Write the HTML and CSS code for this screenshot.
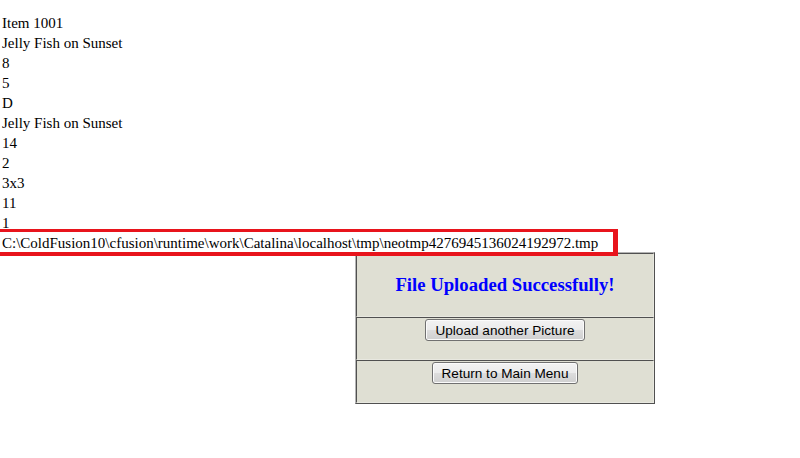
FILE: index.html
```html
<!DOCTYPE html>
<html>
<head>
<meta charset="utf-8">
<link rel="stylesheet" href="styles.css">
</head>
<body>
<div class="lines">
  <div>Item 1001</div>
  <div>Jelly Fish on Sunset</div>
  <div>8</div>
  <div>5</div>
  <div>D</div>
  <div>Jelly Fish on Sunset</div>
  <div>14</div>
  <div>2</div>
  <div>3x3</div>
  <div>11</div>
  <div>1</div>
  <div>C:\ColdFusion10\cfusion\runtime\work\Catalina\localhost\tmp\neotmp4276945136024192972.tmp</div>
</div>
<table class="panel">
  <tr><td class="head-cell"><h3 class="title">File Uploaded Successfully!</h3></td></tr>
  <tr><td class="btn-cell"><button class="btn">Upload another Picture</button></td></tr>
  <tr><td class="btn-cell"><button class="btn">Return to Main Menu</button></td></tr>
</table>
<div class="highlight"></div>
</body>
</html>
```
FILE: styles.css
```css
html, body {
  margin: 0;
  padding: 0;
  background: #ffffff;
}
body {
  position: relative;
  padding: 13px 0 0 2px;
  font-family: "Liberation Serif", "Times New Roman", serif;
  font-size: 15px;
  color: #000;
}
.lines div {
  line-height: 20px;
  height: 20px;
  white-space: nowrap;
}
.panel {
  margin-left: 353px;
  margin-top: -1px;
  width: 300px;
  border-collapse: separate;
  border-spacing: 0;
  border: 1px solid;
  border-color: #b4b4b4 #505050 #505050 #b4b4b4;
}
.panel td {
  background: #dfdfd3;
  border: 1px solid;
  border-color: #505050 #e8e8e0 #e8e8e0 #505050;
  text-align: center;
  vertical-align: top;
  padding: 0;
}
.head-cell {
  height: 62px;
  vertical-align: middle !important;
}
.title {
  margin: 0;
  color: #0000ff;
  font-family: "Liberation Serif", "Times New Roman", serif;
  font-size: 18.7px;
  font-weight: bold;
  line-height: 22px;
}
.btn-cell {
  height: 40px;
  padding-top: 1px !important;
}
.btn {
  margin-top: 0;
  height: 22px;
  padding: 0 9px;
  font-family: "Liberation Sans", Arial, sans-serif;
  font-size: 13.6px;
  color: #000;
  border: 1px solid #707070;
  border-radius: 3px;
  background: linear-gradient(#f2f2f2 0%, #ebebeb 50%, #dddddd 51%, #cfcfcf 100%);
  box-shadow: inset 0 0 0 1px #fbfbfb;
}
.highlight {
  position: absolute;
  left: 0;
  top: 229px;
  width: 613px;
  height: 20px;
  border-style: solid;
  border-color: #e8141c;
  border-width: 3px 5px 4px 0;
  pointer-events: none;
}
```
